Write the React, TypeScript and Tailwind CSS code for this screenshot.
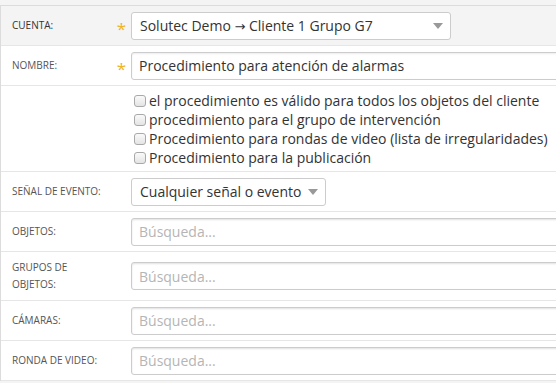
import React from 'react';

const font = { fontFamily: '"Open Sans", "Noto Sans", sans-serif' };

const Star = () => (
  <span className="w-[19px] shrink-0 text-center text-[17px] leading-none text-[#f0b323] pt-[5px]">*</span>
);

const Caret = () => (
  <svg width="10" height="6" viewBox="0 0 10 6" className="shrink-0">
    <path d="M0 0 L10 0 L5 6 Z" fill="#999" />
  </svg>
);

const SearchInput = () => (
  <div className="h-[28px] w-[470px] shrink-0 rounded-[3px] border border-[#ccc] bg-white px-[7px] flex items-center text-[14px] text-[#b5b5b5] shadow-[inset_0_1px_2px_rgba(0,0,0,0.12)]">
    Búsqueda...
  </div>
);

const Row: React.FC<{ label: React.ReactNode; star?: boolean; shaded?: boolean; className?: string; children: React.ReactNode }> = ({
  label,
  star,
  shaded,
  className = 'h-[40px]',
  children,
}) => (
  <div className={`flex items-center border-b border-[#e6e6e6] ${shaded ? 'bg-[#f4f4f4]' : 'bg-white'} ${className}`}>
    <div className={`w-[111px] shrink-0 pl-[11px] text-[10px] leading-[17px] uppercase ${shaded ? 'text-[#333]' : 'text-[#555]'}`}>
      {label}
    </div>
    {star ? <Star /> : <span className="w-[19px] shrink-0" />}
    <div className="flex items-center shrink-0">{children}</div>
  </div>
);

const Check: React.FC<{ text: string }> = ({ text }) => (
  <div className="flex items-center gap-[3px] h-[19px]">
    <span className="h-[12px] w-[12px] shrink-0 rounded-[3px] border border-[#a9a9a9] bg-gradient-to-b from-[#fafafa] to-[#e4e4e4]" />
    <span className="whitespace-nowrap">{text}</span>
  </div>
);

export default function App() {
  return (
    <div className="w-[556px] h-[383px] overflow-hidden bg-[#f4f4f4] pt-[5px]" style={font}>
      <div className="border-t border-l border-[#dcdcdc] bg-white">
        <Row label="Cuenta:" star shaded>
          <div className="h-[28px] w-[320px] rounded-[3px] border border-[#ccc] bg-white pl-[8px] pr-[7px] flex items-center justify-between text-[14px] text-[#333]">
            <span>
              Solutec Demo <span style={{ fontFamily: '"DejaVu Sans", sans-serif' }} className="text-[13px]">→</span> Cliente 1 Grupo G7
            </span>
            <Caret />
          </div>
        </Row>
        <Row label="Nombre:" star>
          <div className="h-[28px] w-[470px] shrink-0 rounded-[3px] border border-[#ccc] bg-white px-[7px] flex items-center text-[14px] text-[#333] shadow-[inset_0_1px_2px_rgba(0,0,0,0.08)]">
            Procedimiento para atención de alarmas
          </div>
        </Row>
        <Row label="" className="h-[86px]">
          <div className="flex flex-col pl-[3px] pt-[1px] text-[14px] text-[#333]">
            <Check text="el procedimiento es válido para todos los objetos del cliente" />
            <Check text="procedimiento para el grupo de intervención" />
            <Check text="Procedimiento para rondas de video (lista de irregularidades)" />
            <Check text="Procedimiento para la publicación" />
          </div>
        </Row>
        <Row label="Señal de evento:">
          <div className="h-[28px] w-[195px] rounded-[3px] border border-[#ccc] bg-white pl-[8px] pr-[7px] flex items-center justify-between text-[14px] text-[#333]">
            <span>Cualquier señal o evento</span>
            <Caret />
          </div>
        </Row>
        <Row label="Objetos:">
          <SearchInput />
        </Row>
        <Row label={<>Grupos de<br />objetos:</>} className="h-[49px]">
          <SearchInput />
        </Row>
        <Row label="Cámaras:">
          <SearchInput />
        </Row>
        <Row label="Ronda de video:">
          <SearchInput />
        </Row>
      </div>
    </div>
  );
}
